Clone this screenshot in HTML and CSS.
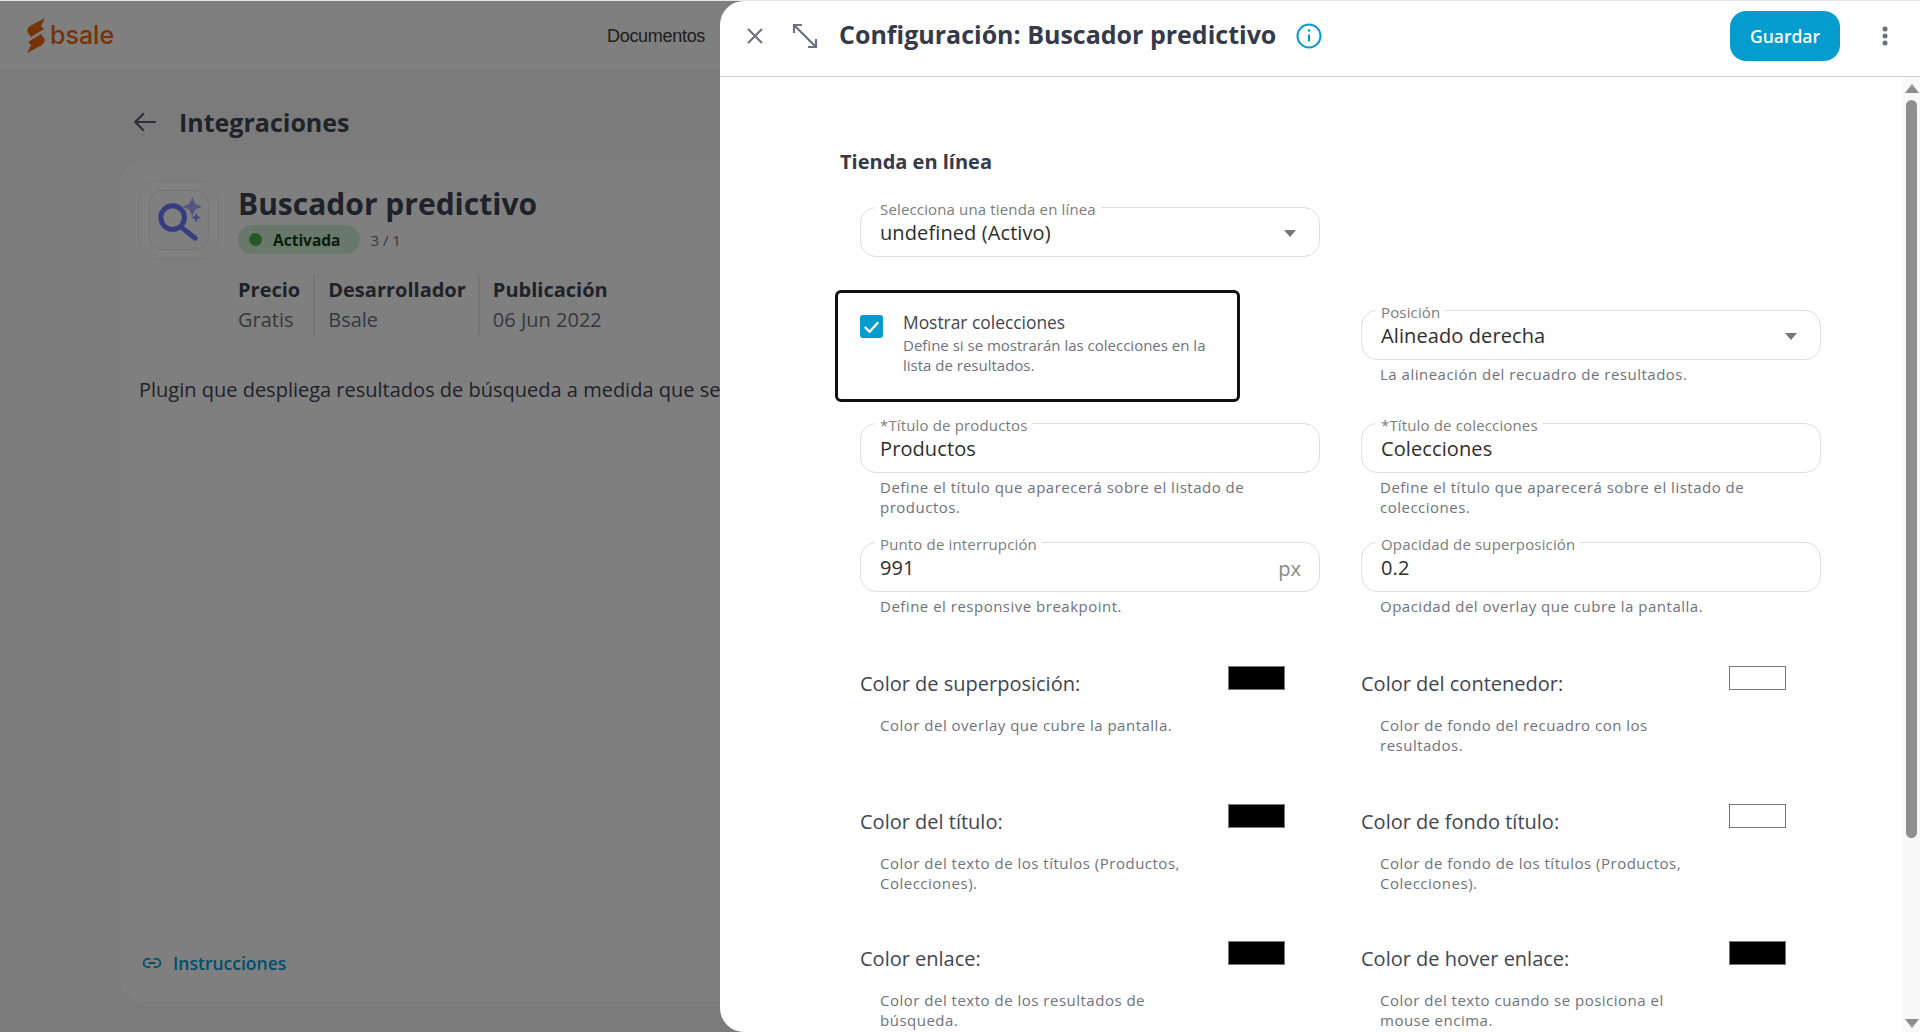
FILE: index.html
```html
<!DOCTYPE html>
<html lang="es">
<head>
  <meta charset="UTF-8">
  <title>Configuración: Buscador predictivo</title>
  <link rel="stylesheet" href="styles.css">
</head>
<body>
  <div class="app">
    <header class="topbar">
      <div class="logo">
        <svg class="logo-mark" viewBox="0 0 18 35" width="18" height="35">
          <path d="M18 0 L3 8 Q-1 11 1 15 L4 19 L17 11 L14 8 L18 0 Z" fill="#f0640f"/>
          <path d="M0 35 L15 27 Q19 24 17 20 L14 16 L1 24 L4 27 L0 35 Z" fill="#f0640f"/>
        </svg>
        <span class="logo-text">bsale</span>
      </div>
      <a class="topbar-link">Documentos</a>
    </header>

    <main class="page">
      <div class="page-title">
        <svg viewBox="0 0 24 24" width="26" height="26" fill="none" stroke="#5a5f6e" stroke-width="2">
          <path d="M22 12H3M11 4l-8 8 8 8"/>
        </svg>
        <h1>Integraciones</h1>
      </div>

      <section class="card">
        <div class="plugin-head">
          <div class="app-icon">
            <div class="app-icon-inner">
              <svg viewBox="0 0 60 60" width="59" height="59">
                <circle cx="23" cy="27" r="12" fill="#fff" fill-opacity=".3" stroke="#6a78ff" stroke-width="5"/>
                <path d="M32 37l14 11" stroke="#6a78ff" stroke-width="5" stroke-linecap="round"/>
                <path d="M43 6l3 7 7 3-7 3-3 7-3-7-7-3 7-3z" fill="#a6adff"/>
                <path d="M47 22l1.500 3.500 3.500 1.500-3.500 1.500-1.500 3.500-1.500-3.500-3.500-1.500 3.500-1.500z" fill="#8c98ff"/>
              </svg>
            </div>
          </div>
          <div class="plugin-info">
            <h2>Buscador predictivo</h2>
            <div class="plugin-status">
              <span class="badge"><i class="badge-dot"></i>Activada</span>
              <span class="plugin-count">3 / 1</span>
            </div>
            <div class="plugin-meta">
              <div class="meta-item"><strong>Precio</strong><span>Gratis</span></div>
              <div class="meta-item"><strong>Desarrollador</strong><span>Bsale</span></div>
              <div class="meta-item"><strong>Publicación</strong><span>06 Jun 2022</span></div>
            </div>
          </div>
        </div>
        <p class="plugin-desc">Plugin que despliega resultados de búsqueda a medida que se</p>
        <a class="plugin-link">
          <svg viewBox="0 0 24 24" width="20" height="20" fill="none" stroke="#00a0d6" stroke-width="2.200">
            <path d="M10 7H7a5 5 0 0 0 0 10h3M14 7h3a5 5 0 0 1 0 10h-3M8 12h8"/>
          </svg>
          Instrucciones
        </a>
      </section>
    </main>

    <div class="overlay"></div>

    <aside class="drawer">
      <div class="drawer-head">
        <svg class="head-icon" viewBox="0 0 24 24" width="24" height="24" fill="none" stroke="#6b6f7e" stroke-width="2">
          <path d="M5 5l14 14M19 5L5 19"/>
        </svg>
        <svg class="head-icon" viewBox="0 0 28 28" width="28" height="28" fill="none" stroke="#6b6f7e" stroke-width="2.200">
          <path d="M3 3l22 22M3 11V3h8M25 17v8h-8"/>
        </svg>
        <h2 class="drawer-title">Configuración: Buscador predictivo</h2>
        <svg class="info-icon" viewBox="0 0 26 26" width="26" height="26" fill="none" stroke="#049cce" stroke-width="2">
          <circle cx="13" cy="13" r="11.500"/>
          <path d="M13 11.500v7"/>
          <circle cx="13" cy="7.500" r="1.300" fill="#049cce" stroke="none"/>
        </svg>
        <button class="btn-save">Guardar</button>
        <svg class="more-icon" viewBox="0 0 6 20" width="6" height="20" fill="#6b6f7e">
          <circle cx="3" cy="3" r="2.500"/>
          <circle cx="3" cy="10" r="2.500"/>
          <circle cx="3" cy="17" r="2.500"/>
        </svg>
      </div>

      <div class="drawer-body">
        <div class="form">
          <h3 class="form-title">Tienda en línea</h3>

          <div class="form-row row-store">
            <div class="col">
              <div class="field">
                <label>Selecciona una tienda en línea</label>
                <span class="value">undefined (Activo)</span>
                <i class="caret"></i>
              </div>
            </div>
          </div>

          <div class="form-row row-check">
            <div class="col">
              <div class="check-box">
                <span class="checkbox">
                  <svg viewBox="0 0 24 24" width="23" height="23" fill="none" stroke="#fff" stroke-width="2.500">
                    <path d="M5 12.500l5 5 9-10"/>
                  </svg>
                </span>
                <div>
                  <div class="check-label">Mostrar colecciones</div>
                  <div class="check-help">Define si se mostrarán las colecciones en la lista de resultados.</div>
                </div>
              </div>
            </div>
            <div class="col col-position">
              <div class="field">
                <label>Posición</label>
                <span class="value">Alineado derecha</span>
                <i class="caret"></i>
              </div>
              <p class="help">La alineación del recuadro de resultados.</p>
            </div>
          </div>

          <div class="form-row row-text">
            <div class="col">
              <div class="field">
                <label>*Título de productos</label>
                <span class="value">Productos</span>
              </div>
              <p class="help">Define el título que aparecerá sobre el listado de productos.</p>
            </div>
            <div class="col">
              <div class="field">
                <label>*Título de colecciones</label>
                <span class="value">Colecciones</span>
              </div>
              <p class="help">Define el título que aparecerá sobre el listado de colecciones.</p>
            </div>
          </div>

          <div class="form-row row-text">
            <div class="col">
              <div class="field">
                <label>Punto de interrupción</label>
                <span class="value">991</span>
                <span class="unit">px</span>
              </div>
              <p class="help">Define el responsive breakpoint.</p>
            </div>
            <div class="col">
              <div class="field">
                <label>Opacidad de superposición</label>
                <span class="value">0.2</span>
              </div>
              <p class="help">Opacidad del overlay que cubre la pantalla.</p>
            </div>
          </div>

          <div class="form-row row-color">
            <div class="col color-item">
              <span class="color-label">Color de superposición:</span>
              <span class="swatch swatch-black"></span>
              <p class="help">Color del overlay que cubre la pantalla.</p>
            </div>
            <div class="col color-item">
              <span class="color-label">Color del contenedor:</span>
              <span class="swatch"></span>
              <p class="help">Color de fondo del recuadro con los resultados.</p>
            </div>
          </div>

          <div class="form-row row-color">
            <div class="col color-item">
              <span class="color-label">Color del título:</span>
              <span class="swatch swatch-black"></span>
              <p class="help">Color del texto de los títulos (Productos, Colecciones).</p>
            </div>
            <div class="col color-item">
              <span class="color-label">Color de fondo título:</span>
              <span class="swatch"></span>
              <p class="help">Color de fondo de los títulos (Productos, Colecciones).</p>
            </div>
          </div>

          <div class="form-row row-color">
            <div class="col color-item">
              <span class="color-label">Color enlace:</span>
              <span class="swatch swatch-black"></span>
              <p class="help">Color del texto de los resultados de búsqueda.</p>
            </div>
            <div class="col color-item">
              <span class="color-label">Color de hover enlace:</span>
              <span class="swatch swatch-black"></span>
              <p class="help">Color del texto cuando se posiciona el mouse encima.</p>
            </div>
          </div>
        </div>

        <div class="scrollbar">
          <i class="arrow-up"></i>
          <div class="scroll-track"><div class="scroll-thumb"></div></div>
          <i class="arrow-down"></i>
        </div>
      </div>
    </aside>
  </div>
</body>
</html>
```

FILE: styles.css
```css
* {
  box-sizing: border-box;
}

html, body {
  height: 100%;
}

body {
  margin: 0;
  border-top: 1px solid #e4e4ee;
  overflow: hidden;
  font-family: "Open Sans", sans-serif;
  color: #3f4553;
  background-color: #f6f6f6;
}

.app {
  position: relative;
  height: 100%;
  overflow: hidden;
}

/* Top bar behind the drawer */
.topbar {
  display: flex;
  align-items: center;
  height: 70px;
  padding-left: 27px;
  background-color: #fff;
  border-bottom: 1px solid #eee;
}

.logo {
  display: flex;
  align-items: center;
  gap: 5px;
  width: 580px;
}

.logo-text {
  font-family: Inter, sans-serif;
  font-size: 25px;
  font-weight: 500;
  line-height: 1;
  color: #f0640f;
}

.topbar-link {
  margin-top: 2px;
  font-family: "Liberation Sans", sans-serif;
  font-size: 18px;
  letter-spacing: -0.3px;
  color: #3a3a3a;
}

/* Page */
.page {
  padding: 0 0 0 120px;
}

.page-title {
  display: flex;
  align-items: center;
  gap: 21px;
  height: 89px;
  padding: 13px 0 0 12px;
}

.page-title h1 {
  margin: 0;
  font-size: 25px;
  font-weight: 700;
}

.card {
  display: flex;
  flex-direction: column;
  width: 1680px;
  height: 842px;
  padding: 20px 18px 27px;
  background-color: #fff;
  border-radius: 24px;
}

.plugin-head {
  display: flex;
  gap: 19px;
}

.app-icon {
  display: flex;
  align-items: center;
  justify-content: center;
  width: 81px;
  height: 80px;
  border: 1px solid #eee;
  border-radius: 20px;
}

.app-icon-inner {
  width: 60px;
  height: 60px;
  border: 1px solid #e6e6e6;
  border-radius: 14px;
}

.plugin-info {
  padding-top: 3px;
}

.plugin-info h2 {
  margin: 0;
  font-size: 30px;
  line-height: 42px;
  font-weight: 700;
}

.plugin-status {
  display: flex;
  align-items: center;
  gap: 10px;
}

.badge {
  display: flex;
  align-items: center;
  gap: 11px;
  height: 29px;
  padding: 0 20px 0 11px;
  font-size: 15.500px;
  font-weight: 700;
  color: #0f3d1a;
  background-color: #d5f0d8;
  border-radius: 15px;
}

.badge-dot {
  width: 13px;
  height: 13px;
  background-color: #4cb050;
  border-radius: 50%;
}

.plugin-count {
  font-size: 15px;
  color: #6c7080;
}

.plugin-meta {
  display: flex;
  margin-top: 21px;
}

.meta-item {
  display: flex;
  flex-direction: column;
  padding: 0 12px 0 13px;
  font-size: 20px;
  line-height: 30px;
  border-left: 2px solid #e8e8e8;
  height: 60px;
}

.meta-item:first-child {
  padding: 0 13px 0 0;
  border-left: none;
}

.meta-item strong {
  font-weight: 700;
}

.meta-item span {
  line-height: 29px;
  color: #6c7080;
}

.plugin-desc {
  margin: 41px 0 0 1px;
  font-size: 20px;
  white-space: nowrap;
}

.plugin-link {
  display: flex;
  align-items: center;
  gap: 11px;
  margin-top: auto;
  padding-left: 4px;
  font-size: 17.500px;
  font-weight: 600;
  color: #00a0d6;
}

.overlay {
  position: absolute;
  inset: 0;
  background-color: rgba(0, 0, 0, 0.5);
}

/* Drawer */
.drawer {
  position: absolute;
  top: 0;
  right: 0;
  bottom: 0;
  display: flex;
  flex-direction: column;
  width: 1200px;
  background-color: #fff;
  border-radius: 24px 0 0 24px;
  overflow: hidden;
}

.drawer-head {
  display: flex;
  align-items: center;
  flex-shrink: 0;
  height: 76px;
  padding: 0 0 5px 23px;
  border-bottom: 1px solid #cdcdd8;
}

.head-icon {
  margin-right: 13px;
}

.head-icon + .head-icon {
  margin: 0 20px 0 11px;
}

.drawer-title {
  margin: 0 20px 4px 0;
  font-size: 25px;
  font-weight: 700;
  color: #343a4a;
}

.btn-save {
  width: 110px;
  height: 50px;
  margin-left: auto;
  font-family: inherit;
  font-size: 17.500px;
  font-weight: 600;
  color: #fff;
  background-color: #049cce;
  border: none;
  border-radius: 16px;
}

.more-icon {
  margin: 0 32px 0 42px;
}

.drawer-body {
  display: flex;
  flex: 1;
  min-height: 0;
}

.form {
  flex: 1;
  overflow: hidden;
  padding: 72px 0 0 120px;
}

.form-title {
  margin: 0 0 33px;
  font-size: 20px;
  line-height: 25px;
  font-weight: 700;
  color: #343a4a;
}

.form-row {
  display: grid;
  grid-template-columns: 460px 460px;
  gap: 41px;
  margin-left: 20px;
}

.row-store {
  margin-bottom: 36px;
}

.row-check {
  height: 130px;
}

.row-text {
  height: 119px;
}

.row-text + .row-color {
  margin-top: 5px;
}

.row-color {
  height: 137.500px;
}

.col-position {
  padding-top: 17px;
}

/* Outlined fields */
.field {
  position: relative;
  height: 50px;
  padding: 11px 19px 0;
  border: 1px solid #dedede;
  border-radius: 16px;
}

.field label {
  position: absolute;
  top: -8px;
  left: 14px;
  padding: 0 5px;
  font-size: 15px;
  line-height: 18px;
  letter-spacing: 0.15px;
  color: #7c7c7c;
  background-color: #fff;
}

.value {
  font-size: 20px;
  line-height: 27px;
  letter-spacing: 0.1px;
  color: #2e2e2e;
}

.unit {
  position: absolute;
  top: 12px;
  right: 18px;
  font-size: 20px;
  line-height: 27px;
  color: #8a8a8a;
}

.caret {
  position: absolute;
  top: 22px;
  right: 23px;
  border-top: 7px solid #777;
  border-left: 6px solid transparent;
  border-right: 6px solid transparent;
}

.help {
  margin: 4px 0 0;
  padding-left: 20px;
  font-size: 15px;
  line-height: 20px;
  letter-spacing: 0.5px;
  color: #6e7280;
}

.col + .col .help {
  padding-left: 19px;
}

/* Checkbox */
.check-box {
  display: flex;
  gap: 20px;
  width: 399px;
  height: 106px;
  margin-left: -22px;
  padding: 22px;
  border-radius: 3px;
  outline: 3px solid #111;
}

.checkbox {
  display: flex;
  flex-shrink: 0;
  width: 23px;
  height: 23px;
  background-color: #049cce;
  border-radius: 3px;
}

.check-label {
  margin-top: -5px;
  font-size: 17.400px;
  line-height: 24px;
  color: #3f4553;
}

.check-help {
  margin-top: 1px;
  font-size: 15px;
  line-height: 20px;
  color: #6e7280;
}

/* Color pickers */
.color-item {
  display: grid;
  grid-template-columns: 368px 57px;
  grid-template-rows: 46px auto;
  align-content: start;
}

.color-label {
  padding-top: 5px;
  font-size: 20px;
  line-height: 26px;
  color: #3f4553;
}

.swatch {
  height: 24px;
  background-color: #fff;
  border: 1px solid #777;
}

.swatch-black {
  background-color: #000;
}

.color-item .help {
  grid-column: 1 / -1;
  width: 348px;
  margin-top: 3px;
}

/* Scrollbar */
.scrollbar {
  display: flex;
  flex-direction: column;
  align-items: center;
  width: 17px;
  flex-shrink: 0;
  background-color: #f8f8f8;
}

.arrow-up {
  margin-top: 7px;
  border-bottom: 9px solid #8f8f8f;
  border-left: 7px solid transparent;
  border-right: 7px solid transparent;
}

.arrow-down {
  margin-bottom: 4px;
  border-top: 9px solid #8f8f8f;
  border-left: 7px solid transparent;
  border-right: 7px solid transparent;
}

.scroll-track {
  flex: 1;
  width: 11px;
  padding-top: 7px;
}

.scroll-thumb {
  height: 738px;
  background-color: #8f8f8f;
  border-radius: 6px;
}
```
